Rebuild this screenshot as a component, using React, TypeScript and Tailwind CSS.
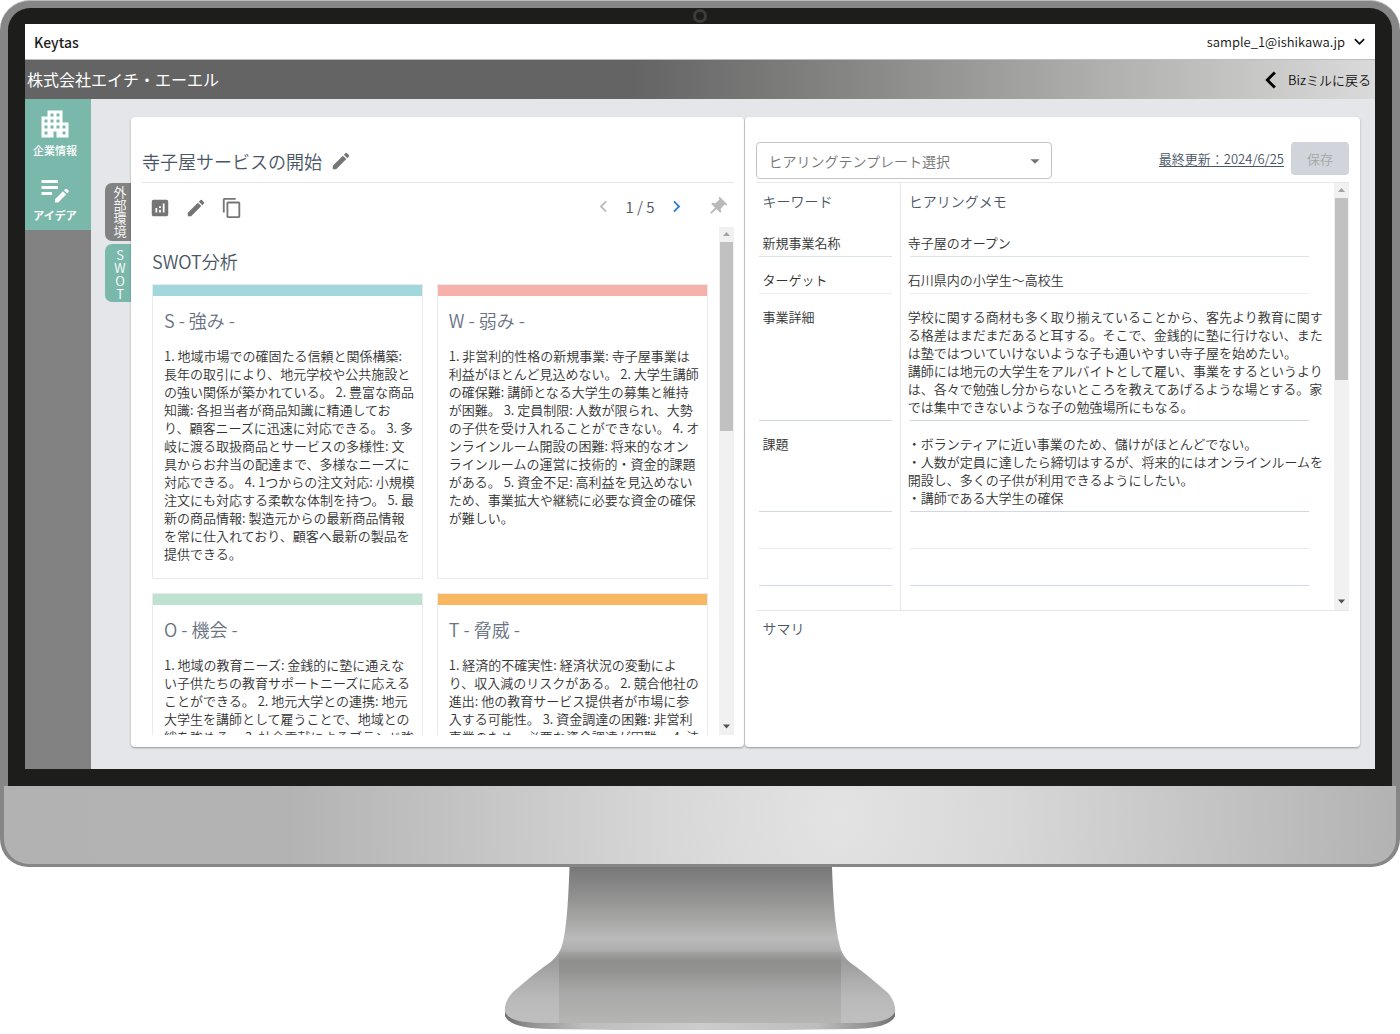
import type { ReactNode } from "react";
import {
  MdAnalytics,
  MdApartment,
  MdArrowDropDown,
  MdChevronLeft,
  MdChevronRight,
  MdContentCopy,
  MdEdit,
  MdEditNote,
  MdExpandMore,
  MdPushPin,
} from "react-icons/md";

type SwotCardData = { title: string; bar: string; lines: string[] };

const swotCards: SwotCardData[] = [
  {
    title: "S - 強み -",
    bar: "bg-[#a2d7dd]",
    lines: [
      "1. 地域市場での確固たる信頼と関係構築:",
      "長年の取引により、地元学校や公共施設と",
      "の強い関係が築かれている。 2. 豊富な商品",
      "知識: 各担当者が商品知識に精通してお",
      "り、顧客ニーズに迅速に対応できる。 3. 多",
      "岐に渡る取扱商品とサービスの多様性: 文",
      "具からお弁当の配達まで、多様なニーズに",
      "対応できる。 4. 1つからの注文対応: 小規模",
      "注文にも対応する柔軟な体制を持つ。 5. 最",
      "新の商品情報: 製造元からの最新商品情報",
      "を常に仕入れており、顧客へ最新の製品を",
      "提供できる。",
    ],
  },
  {
    title: "W - 弱み -",
    bar: "bg-[#f6b1aa]",
    lines: [
      "1. 非営利的性格の新規事業: 寺子屋事業は",
      "利益がほとんど見込めない。 2. 大学生講師",
      "の確保難: 講師となる大学生の募集と維持",
      "が困難。 3. 定員制限: 人数が限られ、大勢",
      "の子供を受け入れることができない。 4. オ",
      "ンラインルーム開設の困難: 将来的なオン",
      "ラインルームの運営に技術的・資金的課題",
      "がある。 5. 資金不足: 高利益を見込めない",
      "ため、事業拡大や継続に必要な資金の確保",
      "が難しい。",
    ],
  },
  {
    title: "O - 機会 -",
    bar: "bg-[#bfe1cf]",
    lines: [
      "1. 地域の教育ニーズ: 金銭的に塾に通えな",
      "い子供たちの教育サポートニーズに応える",
      "ことができる。 2. 地元大学との連携: 地元",
      "大学生を講師として雇うことで、地域との",
      "絆を強める。 3. 社会貢献によるブランド強",
    ],
  },
  {
    title: "T - 脅威 -",
    bar: "bg-[#f8b862]",
    lines: [
      "1. 経済的不確実性: 経済状況の変動によ",
      "り、収入減のリスクがある。 2. 競合他社の",
      "進出: 他の教育サービス提供者が市場に参",
      "入する可能性。 3. 資金調達の困難: 非営利",
      "事業のため、必要な資金調達が困難。 4. 法",
    ],
  },
];

const memoRows = [
  { keyword: "新規事業名称", memo: "寺子屋のオープン", rows: 1, line: "border-[#dde5ec]" },
  { keyword: "ターゲット", memo: "石川県内の小学生～高校生", rows: 1, line: "border-[#eceef1]" },
  {
    keyword: "事業詳細",
    memo:
      "学校に関する商材も多く取り揃えていることから、客先より教育に関する格差はまだまだあると耳する。そこで、金銭的に塾に行けない、または塾ではついていけないような子も通いやすい寺子屋を始めたい。\n講師には地元の大学生をアルバイトとして雇い、事業をするというよりは、各々で勉強し分からないところを教えてあげるような場とする。家では集中できないような子の勉強場所にもなる。",
    rows: 6,
    line: "border-[#cfd8e4]",
  },
  {
    keyword: "課題",
    memo:
      "・ボランティアに近い事業のため、儲けがほとんどでない。\n・人数が定員に達したら締切はするが、将来的にはオンラインルームを開設し、多くの子供が利用できるようにしたい。\n・講師である大学生の確保",
    rows: 4,
    line: "border-[#cfd8e4]",
  },
  { keyword: "", memo: "", rows: 1, line: "border-[#e5eaef]" },
  { keyword: "", memo: "", rows: 1, line: "border-[#cfd8e4]" },
];

function ScrollBar({ thumb }: { thumb: string }) {
  return (
    <div aria-hidden="true" className="flex w-[15px] shrink-0 flex-col items-center bg-[#f1f1f1]">
      <svg viewBox="0 0 15 15" className="h-[15px] w-[15px] shrink-0">
        <path d="M4 9 7.500 5 11 9Z" fill="#a3a3a3" />
      </svg>
      <div className={`w-[13px] bg-[#c1c1c1] ${thumb}`} />
      <svg viewBox="0 0 15 15" className="mt-auto h-4 w-[15px] shrink-0">
        <path d="M4 5 7.500 9 11 5Z" fill="#505050" />
      </svg>
    </div>
  );
}

function SwotCard({ title, bar, lines }: SwotCardData) {
  return (
    <section className="border border-[#e8eaed] bg-white">
      <div className={`h-[11px] ${bar}`} />
      <div className="px-[11px] pt-[10px] pb-[15px]">
        <h3 className="text-[18px] leading-7 text-gray-500">{title}</h3>
        <p className="mt-[13px] text-[13px] leading-[18px] whitespace-pre text-[#333333]">
          {lines.join("\n")}
        </p>
      </div>
    </section>
  );
}

function NavItem({ icon, label, className }: { icon: ReactNode; label: string; className: string }) {
  return (
    <a href="#" className={`flex flex-col items-center bg-[#7ab8ab] pr-[6px] text-[11px] leading-4 text-white ${className}`}>
      {icon}
      {label}
    </a>
  );
}

function Stand() {
  return (
    <svg viewBox="504 867 392 167" className="mx-auto block h-[167px] w-[392px]" aria-hidden="true">
      <defs>
        <linearGradient id="neck" gradientUnits="userSpaceOnUse" x1="0" y1="867" x2="0" y2="1023">
          <stop offset="0" stopColor="#787878" />
          <stop offset="0.1" stopColor="#848484" />
          <stop offset="0.24" stopColor="#989897" />
          <stop offset="0.38" stopColor="#adadac" />
          <stop offset="0.46" stopColor="#bbbbbb" />
          <stop offset="0.5" stopColor="#b6b6b6" />
          <stop offset="0.6" stopColor="#8e8e8d" />
          <stop offset="0.67" stopColor="#939392" />
          <stop offset="0.8" stopColor="#a8a8a8" />
          <stop offset="1" stopColor="#b5b5b3" />
        </linearGradient>
        <linearGradient id="wing" gradientUnits="userSpaceOnUse" x1="0" y1="867" x2="0" y2="1023">
          <stop offset="0" stopColor="#787878" />
          <stop offset="0.1" stopColor="#848484" />
          <stop offset="0.24" stopColor="#989897" />
          <stop offset="0.38" stopColor="#adadac" />
          <stop offset="0.46" stopColor="#bbbbbb" />
          <stop offset="0.52" stopColor="#b0b0b0" />
          <stop offset="0.6" stopColor="#9b9b9b" />
          <stop offset="0.72" stopColor="#acacac" />
          <stop offset="0.84" stopColor="#b9b9b9" />
          <stop offset="1" stopColor="#bfbfbf" />
        </linearGradient>
        <linearGradient id="lip" x1="0" x2="1" y1="0" y2="0">
          <stop offset="0" stopColor="#6f6f6f" />
          <stop offset="0.06" stopColor="#8f8f8f" />
          <stop offset="0.2" stopColor="#bdbdbd" />
          <stop offset="0.5" stopColor="#cccccc" />
          <stop offset="0.8" stopColor="#bdbdbd" />
          <stop offset="0.94" stopColor="#8f8f8f" />
          <stop offset="1" stopColor="#6f6f6f" />
        </linearGradient>
      </defs>
      <path
        d="M505 1008V1016C509 1025 525 1029 550 1029L620 1030H780L850 1029C875 1029 891 1025 895 1016V1008Z"
        fill="url(#lip)"
      />
      <path
        d="M569.500 867C568.500 895 567 925 563 942C560 954 554 960 545 966C535 973 520 986 513 992C507 998 504 1006 505 1012C509 1020 521 1023 545 1023H855C879 1023 891 1020 895 1012C896 1006 893 998 887 992C880 986 865 973 855 966C846 960 841 954 839 942C835 925 833 895 832 867Z"
        fill="url(#wing)"
      />
      <path d="M559 952H841V1023H559Z" fill="url(#neck)" />
    </svg>
  );
}

export default function App() {
  return (
    <div className="w-full bg-white font-['Noto_Sans_CJK_JP',sans-serif] text-[13px] leading-[18px] font-[350]">
      <div className="overflow-hidden rounded-t-[30px] rounded-b-[28px] border-t border-[#b8bab9] bg-[#868686]">
        <div className="mx-2 mt-[7px] rounded-t-[22px] bg-[#1d1d1b] px-[17px] pb-[17px]">
          <div className="flex h-4 items-center justify-center">
            <div className="size-[14px] rounded-full border-[3px] border-[#3c3c3b]" />
          </div>

          <div className="flex flex-col bg-[#e5e6ea]">
            <header className="flex h-9 items-center justify-between border-b border-[#bdbdbd] bg-white px-[9px]">
              <span className="text-[14px] font-medium text-[#1c1c1c]">Keytas</span>
              <button type="button" className="-mr-1 flex items-center gap-1 text-[13px] text-[#111111]">
                sample_1@ishikawa.jp
                <MdExpandMore size={21} />
              </button>
            </header>

            <div className="flex h-[39px] items-center justify-between bg-linear-to-r from-[#646464] from-45% via-[#b0b0ae] via-80% to-[#dadada] pr-1 pl-[2px]">
              <h1 className="pb-[2px] text-[16px] font-normal text-white">株式会社エイチ・エーエル</h1>
              <a href="#" className="flex items-center text-[13px] text-[#111111]">
                <MdChevronLeft size={34} className="text-black" />
                Bizミルに戻る
              </a>
            </div>

            <div className="flex">
              <nav className="w-[66px] shrink-0 bg-[#828282]">
                <NavItem icon={<MdApartment size={36} />} label="企業情報" className="h-[66px] pt-[7px] font-medium" />
                <NavItem icon={<MdEditNote size={36} />} label="アイデア" className="h-[65px] pt-[6px] font-bold" />
              </nav>

              <main className="flex min-w-0 flex-1 pt-[18px] pr-[15px] pb-[22px] pl-[14px]">
                <div className="mt-[66px] flex w-[26px] shrink-0 flex-col gap-[3px] text-[13px] text-white">
                  <button type="button" className="flex h-[58px] items-center justify-center rounded-l-[7px] bg-[#828282] pl-[3px]">
                    <span className="[text-orientation:upright] [writing-mode:vertical-rl]">外部環境</span>
                  </button>
                  <button type="button" className="flex h-[58px] items-center justify-center rounded-l-[7px] bg-[#7ab8ab] pt-[3px] pl-[3px]">
                    <span className="[text-orientation:upright] [writing-mode:vertical-rl]">SWOT</span>
                  </button>
                </div>

                <div className="flex min-w-0 flex-1 gap-px">
                  <section className="min-w-0 flex-[613] rounded-[4px] bg-white pt-[25px] pr-[10px] pb-3 pl-[11px] shadow-[0_1px_2px_rgba(0,0,0,0.35)]">
                    <div className="flex h-[41px] items-center gap-2 border-b border-gray-200 pb-[3px]">
                      <h2 className="text-[18px] leading-7 text-gray-600">寺子屋サービスの開始</h2>
                      <button type="button" aria-label="名称を編集" className="text-[#757575]">
                        <MdEdit size={22} />
                      </button>
                    </div>

                    <div className="flex h-11 items-center justify-between pt-[6px] pl-[7px] text-[#757575]">
                      <div className="flex items-center gap-[14px]">
                        <button type="button" aria-label="分析">
                          <MdAnalytics size={22} />
                        </button>
                        <button type="button" aria-label="編集">
                          <MdEdit size={22} />
                        </button>
                        <button type="button" aria-label="コピー">
                          <MdContentCopy size={22} />
                        </button>
                      </div>
                      <div className="flex items-center gap-[10px] pr-[6px] pb-[3px]">
                        <button type="button" aria-label="前へ" className="text-[#bdbdbd]">
                          <MdChevronLeft size={23} />
                        </button>
                        <span className="text-[15px] text-gray-600">1 / 5</span>
                        <button type="button" aria-label="次へ" className="text-[#3182ce]">
                          <MdChevronRight size={23} />
                        </button>
                        <button type="button" aria-label="ピン留め" className="ml-2 text-[#b9b9b9]">
                          <MdPushPin size={22} className="rotate-45" />
                        </button>
                      </div>
                    </div>

                    <div className="flex h-[508px]">
                      <div className="min-w-0 flex-1 overflow-hidden pt-5 pr-[11px] pl-[10px]">
                        <h2 className="mb-[9px] text-[18px] leading-7 text-gray-600">SWOT分析</h2>
                        <div className="grid grid-cols-2 gap-[14px]">
                          {swotCards.map((card) => (
                            <SwotCard key={card.title} {...card} />
                          ))}
                        </div>
                      </div>
                      <ScrollBar thumb="h-[189px]" />
                    </div>
                  </section>

                  <section className="min-w-0 flex-[615] rounded-[4px] bg-white px-[11px] pt-[25px] shadow-[0_1px_2px_rgba(0,0,0,0.35)]">
                    <div className="flex h-10 items-start justify-between">
                      <div className="relative w-1/2">
                        <select
                          aria-label="ヒアリングテンプレート選択"
                          className="h-[37px] w-full appearance-none rounded-[4px] border border-[#c4c4c4] bg-white px-3 text-[14px] text-[#757575]"
                        >
                          <option>ヒアリングテンプレート選択</option>
                        </select>
                        <MdArrowDropDown size={22} className="pointer-events-none absolute top-2 right-[6px] text-[#757575]" />
                      </div>
                      <div className="flex items-center gap-[7px]">
                        <a href="#" className="text-[13px] text-gray-600 underline underline-offset-2">
                          最終更新：2024/6/25
                        </a>
                        <button type="button" disabled className="h-[33px] w-[58px] rounded-[4px] bg-[#d1d5db] text-[13px] text-[#a6a6a6]">
                          保存
                        </button>
                      </div>
                    </div>

                    <div className="flex h-[429px] border-y border-gray-200">
                      <table className="h-full min-w-0 flex-1 table-fixed border-collapse text-left">
                        <colgroup>
                          <col className="w-1/4" />
                          <col className="w-3/4" />
                        </colgroup>
                        <thead>
                          <tr className="h-[37px] text-[14px] text-gray-600">
                            <th scope="col" className="border-r border-gray-200 p-0 pb-[2px] pl-[7px] font-[350]">
                              キーワード
                            </th>
                            <th scope="col" className="p-0 pb-[2px] pl-2 font-[350]">
                              ヒアリングメモ
                            </th>
                          </tr>
                        </thead>
                        <tbody className="align-top text-[13px] text-[#333333]">
                          {memoRows.map((row, i) => (
                            <tr key={i}>
                              <td className="border-r border-gray-200 p-0">
                                <div className={`mr-2 ml-[3px] border-b pt-[14px] pb-1 pl-1 ${row.line}`}>
                                  <textarea
                                    aria-label={`キーワード ${i + 1}`}
                                    rows={row.rows}
                                    defaultValue={row.keyword}
                                    className="block w-full resize-none overflow-hidden leading-[18px] outline-none"
                                  />
                                </div>
                              </td>
                              <td className="p-0 pt-[14px]">
                                <textarea
                                  aria-label={`ヒアリングメモ ${i + 1}`}
                                  rows={row.rows}
                                  defaultValue={row.memo}
                                  className="block w-full resize-none overflow-hidden pl-[7px] leading-[18px] outline-none"
                                />
                                <div className={`mr-[25px] ml-[9px] border-b pt-1 ${row.line}`} />
                              </td>
                            </tr>
                          ))}
                          <tr className="h-6">
                            <td className="border-r border-gray-200 p-0" />
                            <td className="p-0" />
                          </tr>
                        </tbody>
                      </table>
                      <ScrollBar thumb="h-[182px]" />
                    </div>

                    <h2 className="mt-2 pl-[7px] text-[14px] text-gray-600">サマリ</h2>
                  </section>
                </div>
              </main>
            </div>
          </div>
        </div>

        <div className="mx-1 mb-[3px] h-[78px] rounded-b-[25px] bg-[radial-gradient(circle_at_60%_40%,#e3e3e3_0%,#d8d8d8_20%,#c6c6c6_42%,#b3b3b3_66%,#b2b2b2_100%)]" />
      </div>

      <Stand />
    </div>
  );
}
